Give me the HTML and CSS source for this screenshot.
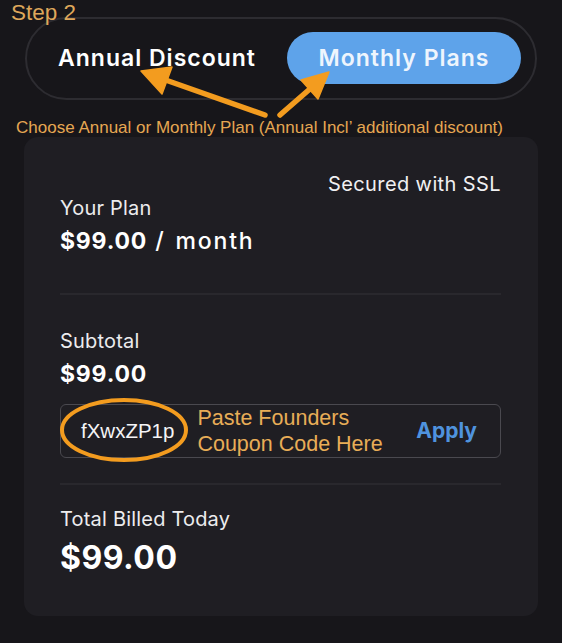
FILE: index.html
```html
<!DOCTYPE html>
<html lang="en">
<head>
<meta charset="utf-8">
<title>Step 2 - Choose Plan</title>
<link rel="stylesheet" href="styles.css">
</head>
<body>
<div class="page">
  <div class="step-label">Step 2</div>

  <div class="toggle">
    <div class="seg">Annual Discount</div>
    <div class="seg seg-active">Monthly Plans</div>
  </div>

  <p class="caption">Choose Annual or Monthly Plan (Annual Incl’ additional discount)</p>

  <div class="card">
    <div class="secure">Secured with SSL</div>
    <div class="label">Your Plan</div>
    <div class="value value-plan">$99.00 <span class="per">/ month</span></div>

    <div class="divider divider-1"></div>

    <div class="label">Subtotal</div>
    <div class="value">$99.00</div>

    <div class="coupon">
      <span class="code">fXwxZP1p</span>
      <span class="hint">Paste Founders<br>Coupon Code Here</span>
      <span class="apply">Apply</span>
    </div>

    <div class="divider divider-2"></div>

    <div class="label">Total Billed Today</div>
    <div class="total">$99.00</div>
  </div>

  <svg class="marks" width="562" height="643" viewBox="0 0 562 643" aria-hidden="true">
    <g fill="#f39c1f" stroke="#f39c1f">
      <line x1="265" y1="115" x2="167" y2="80.5" stroke-width="5.5" stroke-linecap="round"/>
      <polygon points="141,71 172,67 162,94" stroke-width="1.5" stroke-linejoin="round"/>
      <line x1="280" y1="115" x2="311" y2="88" stroke-width="5.5" stroke-linecap="round"/>
      <polygon points="329,72 318,99 301,80" stroke-width="1.5" stroke-linejoin="round"/>
    </g>
    <ellipse cx="124" cy="430" rx="62" ry="30" fill="none" stroke="#f39c1f" stroke-width="4"/>
  </svg>
</div>
</body>
</html>
```
FILE: styles.css
```css
* { box-sizing: border-box; }

html, body {
  margin: 0;
  padding: 0;
  background: #17161a;
}

.page {
  position: relative;
  width: 562px;
  height: 643px;
  overflow: hidden;
  padding-top: 17px;
  font-family: Inter, "Noto Sans", sans-serif;
  color: #f2f2f4;
}

.step-label {
  position: absolute;
  left: 11px;
  top: 0;
  font-family: "Liberation Sans", Arial, sans-serif;
  font-size: 22.5px;
  line-height: 25px;
  color: #dea75b;
}

.toggle {
  display: flex;
  align-items: center;
  margin: 0 25px;
  height: 83px;
  padding: 13px 14px 14px 0;
  border: 2px solid #2d2c31;
  border-radius: 42px;
}

.seg {
  font-size: 23px;
  font-weight: 600;
  letter-spacing: 1px;
  color: #ffffff;
  text-align: center;
  line-height: 52px;
}

.seg:first-child {
  flex: 1;
}

.seg-active {
  width: 234px;
  height: 52px;
  border-radius: 26px;
  background: #5ea3ea;
  color: #eef5fd;
}

.caption {
  margin: 19px 0 0;
  padding-left: 16px;
  font-family: "Liberation Sans", Arial, sans-serif;
  font-size: 17px;
  line-height: 18px;
  color: #e6a752;
  white-space: nowrap;
}

.card {
  margin: 0 24px;
  height: 479px;
  padding: 35px 37px 0 36px;
  background: #1f1e23;
  border-radius: 14px;
}

.secure {
  text-align: right;
  font-size: 20px;
  line-height: 24px;
  letter-spacing: 0.4px;
  color: #f0f0f2;
}

.label {
  font-size: 20px;
  line-height: 24px;
  letter-spacing: 0.2px;
  color: #ececee;
}

.value {
  margin-top: 7px;
  font-size: 23px;
  font-weight: 700;
  line-height: 28px;
  letter-spacing: 0.8px;
  color: #ffffff;
}

.value-plan {
  word-spacing: 2px;
}

.per {
  font-weight: 500;
  letter-spacing: 1.8px;
}

.divider {
  height: 2px;
  background: #29282d;
}

.divider-1 {
  margin: 38px 0 34px;
}

.coupon {
  display: flex;
  align-items: center;
  height: 54px;
  margin-top: 16px;
  padding: 0 23px 0 20px;
  border: 1.5px solid #4a494f;
  border-radius: 6px;
}

.code {
  font-family: "Liberation Sans", Arial, sans-serif;
  font-size: 20.5px;
  line-height: 26px;
  color: #f4f4f6;
}

.hint {
  margin-left: 23px;
  font-family: "Liberation Sans", Arial, sans-serif;
  font-size: 21.5px;
  line-height: 26px;
  color: #e8ad57;
}

.apply {
  margin-left: auto;
  font-size: 21px;
  font-weight: 700;
  line-height: 26px;
  color: #4f93de;
}

.divider-2 {
  margin: 25px 0 22px;
}

.total {
  margin-top: 7px;
  font-size: 32px;
  font-weight: 700;
  line-height: 40px;
  letter-spacing: 0.5px;
  color: #ffffff;
}

.marks {
  position: absolute;
  left: 0;
  top: 0;
  pointer-events: none;
}
```
